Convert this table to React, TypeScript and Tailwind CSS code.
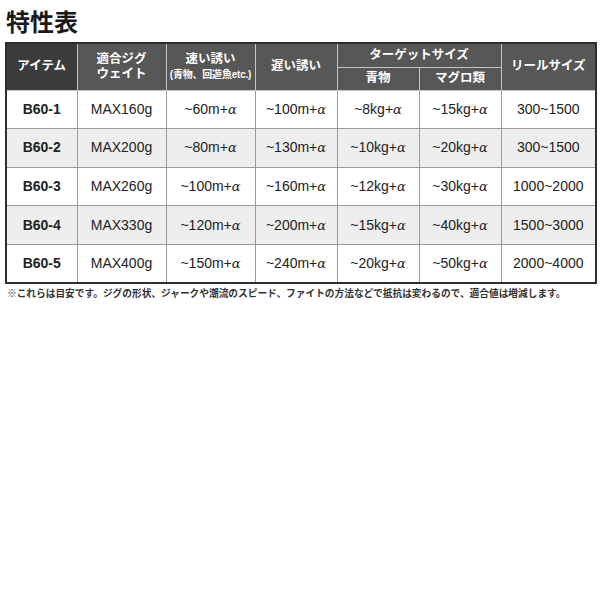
import React from "react";

const rows = [
  ["B60-1", "MAX160g", "~60m+", "~100m+", "~8kg+", "~15kg+", "300~1500"],
  ["B60-2", "MAX200g", "~80m+", "~130m+", "~10kg+", "~20kg+", "300~1500"],
  ["B60-3", "MAX260g", "~100m+", "~160m+", "~12kg+", "~30kg+", "1000~2000"],
  ["B60-4", "MAX330g", "~120m+", "~200m+", "~15kg+", "~40kg+", "1500~3000"],
  ["B60-5", "MAX400g", "~150m+", "~240m+", "~20kg+", "~50kg+", "2000~4000"],
];

const font = { fontFamily: '"Liberation Sans", "Noto Sans CJK JP", sans-serif' };

function Alpha({ t }: { t: string }) {
  return (
    <>
      {t}
      <span className="italic font-['DejaVu_Serif'] text-[13px]">α</span>
    </>
  );
}

export default function App() {
  return (
    <div className="w-[600px] h-[600px] bg-white text-[#222]" style={font}>
      <div className="pt-[8px] pl-[6px] h-[42px] text-[24px] leading-[30px] font-bold text-[#1a1a1a]">
        特性表
      </div>
      <div className="px-[5px]">
        <table className="w-[590px] table-fixed border-collapse border-2 border-[#2e2e2e]">
          <colgroup>
            <col className="w-[71px]" />
            <col className="w-[89px]" />
            <col className="w-[89px]" />
            <col className="w-[82px]" />
            <col className="w-[82px]" />
            <col className="w-[82px]" />
            <col className="w-[95px]" />
          </colgroup>
          <thead>
            <tr className="h-[24px] text-white font-bold text-[12.5px]">
              <th rowSpan={2} className="bg-[#3c3c3c] border border-[#c4c4c4] border-l-[#2e2e2e] border-t-[#2e2e2e] font-bold">
                アイテム
              </th>
              <th rowSpan={2} className="bg-[#575757] border border-[#c4c4c4] border-t-[#2e2e2e] font-bold leading-[15px]">
                適合ジグ
                <br />
                ウェイト
              </th>
              <th rowSpan={2} className="bg-[#575757] border border-[#c4c4c4] border-t-[#2e2e2e] font-bold leading-[15px]">
                速い誘い
                <br />
                <span className="text-[10px] tracking-[-0.2px] whitespace-nowrap">(青物、回遊魚etc.)</span>
              </th>
              <th rowSpan={2} className="bg-[#575757] border border-[#c4c4c4] border-t-[#2e2e2e] font-bold">
                遅い誘い
              </th>
              <th colSpan={2} className="bg-[#575757] border border-[#c4c4c4] border-t-[#2e2e2e] font-bold">
                ターゲットサイズ
              </th>
              <th rowSpan={2} className="bg-[#575757] border border-[#c4c4c4] border-t-[#2e2e2e] font-bold">
                リールサイズ
              </th>
            </tr>
            <tr className="h-[23px] text-white text-[12.5px]">
              <th className="bg-[#575757] border border-[#c4c4c4] font-bold">青物</th>
              <th className="bg-[#575757] border border-[#c4c4c4] font-bold">マグロ類</th>
            </tr>
          </thead>
          <tbody>
            {rows.map((r, i) => (
              <tr key={r[0]} className={i % 2 === 1 ? "h-[38.6px] bg-[#eeeeee]" : "h-[38.6px] bg-white"}>
                <td className="border border-[#9a9a9a] text-center text-[14px] font-bold">{r[0]}</td>
                <td className="border border-[#9a9a9a] text-center text-[14px]">{r[1]}</td>
                <td className="border border-[#9a9a9a] text-center text-[14px]"><Alpha t={r[2]} /></td>
                <td className="border border-[#9a9a9a] text-center text-[14px]"><Alpha t={r[3]} /></td>
                <td className="border border-[#9a9a9a] text-center text-[14px]"><Alpha t={r[4]} /></td>
                <td className="border border-[#9a9a9a] text-center text-[14px]"><Alpha t={r[5]} /></td>
                <td className="border border-[#9a9a9a] text-center text-[14px]">{r[6]}</td>
              </tr>
            ))}
          </tbody>
        </table>
      </div>
      <div className="pl-[7px] pt-[3px] text-[9.7px] leading-[14px] font-bold text-[#333] whitespace-nowrap">
        ※これらは目安です。ジグの形状、ジャークや潮流のスピード、ファイトの方法などで抵抗は変わるので、適合値は増減します。
      </div>
    </div>
  );
}
